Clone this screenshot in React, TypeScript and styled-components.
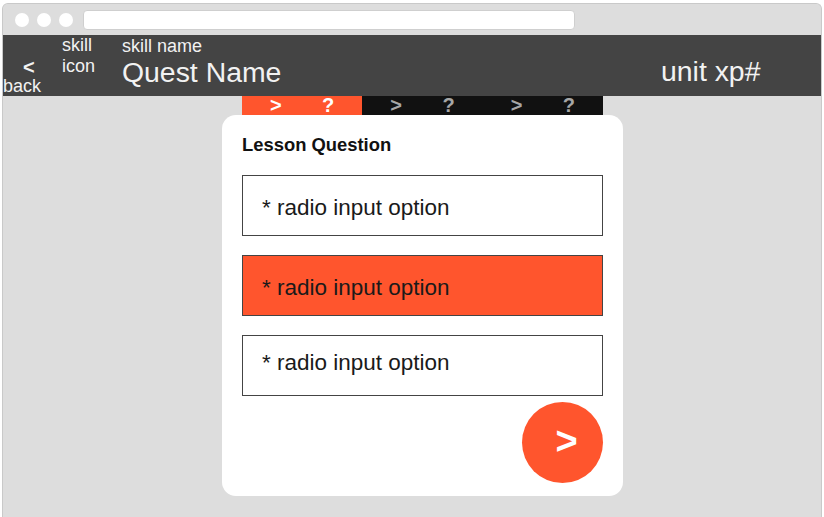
import React from "react";
import styled, { createGlobalStyle } from "styled-components";

const Global = createGlobalStyle`
  html, body { margin: 0; padding: 0; background: #ffffff; }
  body { font-family: "Liberation Sans", Arial, sans-serif; }
  * { box-sizing: border-box; }
`;

const ORANGE = "#ff552d";

const Window = styled.div`
  margin: 3px 2px 0 2px;
  width: 820px;
  height: 514px;
  border: 1px solid #c9c9c9;
  border-bottom: none;
  border-radius: 6px 6px 0 0;
  overflow: hidden;
  background: #dddddd;
  display: flex;
  flex-direction: column;
`;

const Chrome = styled.div`
  height: 31px;
  display: flex;
  align-items: center;
  padding: 0 0 0 12px;
  gap: 8px;
  background: #dddddd;
`;

const Dot = styled.span`
  width: 14px;
  height: 14px;
  border-radius: 50%;
  background: #ffffff;
`;

const Url = styled.div`
  margin-left: 2px;
  width: 492px;
  height: 20px;
  margin-top: 1px;
  background: #ffffff;
  border: 1px solid #cfcfcf;
  border-radius: 4px;
`;

const Header = styled.header`
  height: 61px;
  background: #444444;
  color: #f2f2f2;
  display: flex;
  align-items: stretch;
  margin: 0 -1px;
`;

const Back = styled.div`
  width: 60px;
  padding-left: 1px;
  display: flex;
  flex-direction: column;
  justify-content: flex-end;
  padding-bottom: 2px;
`;

const BackArrow = styled.span`
  font-weight: bold;
  font-size: 20px;
  line-height: 14px;
  padding-left: 20px;
  margin-bottom: 4px;
`;

const BackLabel = styled.span`
  font-size: 18px;
  line-height: 16px;
`;

const SkillIcon = styled.div`
  width: 60px;
  font-size: 18px;
  line-height: 21px;
`;

const Titles = styled.div`
  flex: 1;
  display: flex;
  flex-direction: column;
  padding-top: 2px;
`;

const SkillName = styled.span`
  font-size: 18px;
  line-height: 19px;
`;

const QuestName = styled.span`
  font-size: 28.4px;
  line-height: 32px;
`;

const Xp = styled.div`
  width: 161px;
  font-size: 28.4px;
  line-height: 32px;
  padding-top: 20px;
`;

const Body = styled.main`
  flex: 1;
  display: flex;
  flex-direction: column;
  align-items: center;
  padding-left: 21px;
`;

const Progress = styled.div`
  width: 361px;
  height: 19px;
  display: flex;
`;

const Segment = styled.div<{ $active?: boolean }>`
  flex: 1;
  display: flex;
  justify-content: space-between;
  align-items: center;
  padding: 0 28px;
  background: ${(p) => (p.$active ? ORANGE : "#111111")};
  color: ${(p) => (p.$active ? "#ffffff" : "#a6a6a6")};
  font-weight: bold;
  font-size: 20px;
  line-height: 19px;
`;

const Card = styled.section`
  width: 401px;
  height: 381px;
  background: #ffffff;
  border-radius: 14px;
  padding: 20px 20px 13px 20px;
  display: flex;
  flex-direction: column;
`;

const Question = styled.h2`
  margin: 0;
  font-size: 18.4px;
  font-weight: bold;
  color: #111111;
  line-height: 20px;
`;

const Options = styled.div`
  margin-top: 20px;
  display: flex;
  flex-direction: column;
  gap: 19px;
`;

const Option = styled.label<{ $selected?: boolean; $lifted?: boolean }>`
  height: 61px;
  border: 1px solid #444444;
  background: ${(p) => (p.$selected ? ORANGE : "#ffffff")};
  color: #1a1a1a;
  font-size: 22.5px;
  display: flex;
  align-items: center;
  padding-left: 19px;
  padding-top: ${(p) => (p.$lifted ? 0 : 4)}px;
  padding-bottom: ${(p) => (p.$lifted ? 6 : 0)}px;
`;

const Footer = styled.div`
  margin-top: auto;
  display: flex;
  justify-content: flex-end;
`;

const NextButton = styled.button`
  width: 81px;
  height: 81px;
  border-radius: 50%;
  border: none;
  background: ${ORANGE};
  color: #ffffff;
  font-family: "Liberation Sans", Arial, sans-serif;
  font-weight: bold;
  font-size: 38px;
  display: flex;
  align-items: center;
  justify-content: center;
  padding: 0 0 3px 8px;
`;

export default function App() {
  return (
    <>
      <Global />
      <Window>
        <Chrome>
          <Dot />
          <Dot />
          <Dot />
          <Url />
        </Chrome>
        <Header>
          <Back>
            <BackArrow>&lt;</BackArrow>
            <BackLabel>back</BackLabel>
          </Back>
          <SkillIcon>
            skill
            <br />
            icon
          </SkillIcon>
          <Titles>
            <SkillName>skill name</SkillName>
            <QuestName>Quest Name</QuestName>
          </Titles>
          <Xp>unit xp#</Xp>
        </Header>
        <Body>
          <Progress>
            <Segment $active>
              <span>&gt;</span>
              <span>?</span>
            </Segment>
            <Segment>
              <span>&gt;</span>
              <span>?</span>
            </Segment>
            <Segment>
              <span>&gt;</span>
              <span>?</span>
            </Segment>
          </Progress>
          <Card>
            <Question>Lesson Question</Question>
            <Options>
              <Option>* radio input option</Option>
              <Option $selected>* radio input option</Option>
              <Option $lifted>* radio input option</Option>
            </Options>
            <Footer>
              <NextButton>&gt;</NextButton>
            </Footer>
          </Card>
        </Body>
      </Window>
    </>
  );
}
